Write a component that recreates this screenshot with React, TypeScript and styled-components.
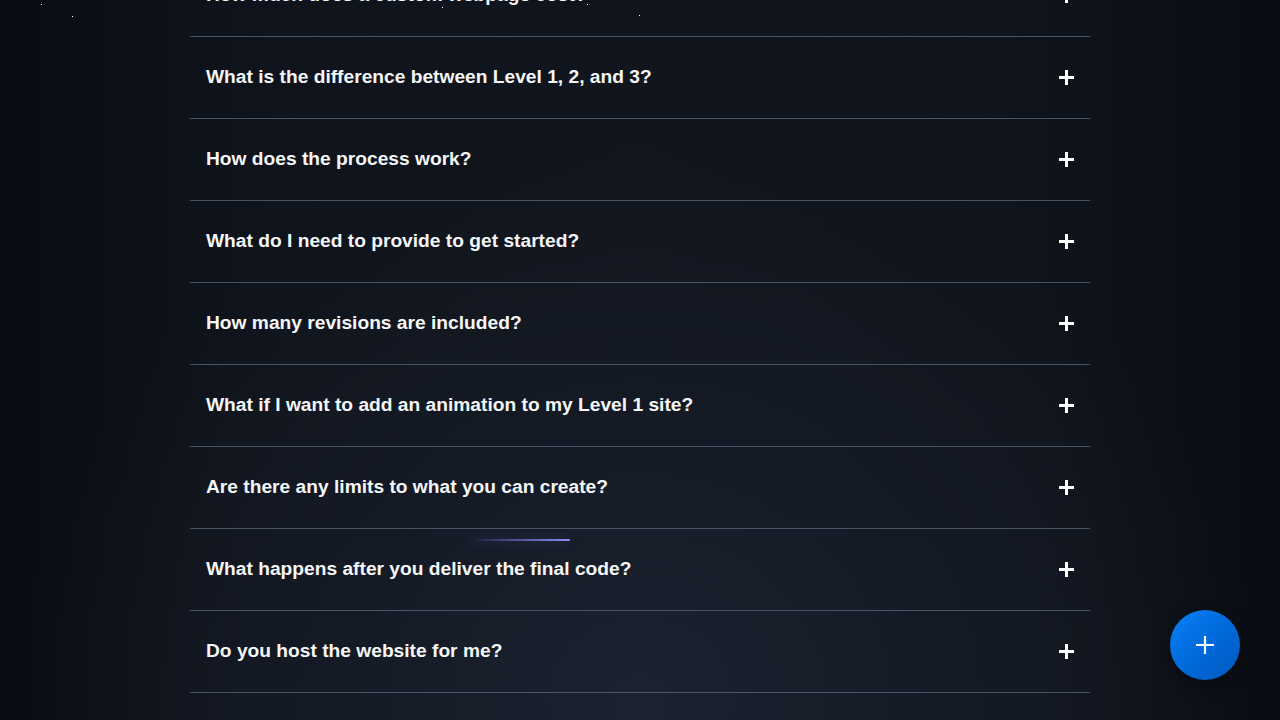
import { createGlobalStyle, styled } from 'styled-components';

const questions = [
  'How much does a custom webpage cost?',
  'What is the difference between Level 1, 2, and 3?',
  'How does the process work?',
  'What do I need to provide to get started?',
  'How many revisions are included?',
  'What if I want to add an animation to my Level 1 site?',
  'Are there any limits to what you can create?',
  'What happens after you deliver the final code?',
  'Do you host the website for me?',
];

const stars = [
  { x: 41, y: 4 },
  { x: 72, y: 16 },
  { x: 442, y: 7 },
  { x: 587, y: 4 },
  { x: 639, y: 15 },
];

const GlobalStyle = createGlobalStyle`
  html, body {
    margin: 0;
    padding: 0;
    height: 100%;
    overflow: hidden;
  }
  body {
    background: #0b0e14;
    font-family: "Liberation Sans", Arial, sans-serif;
  }
`;

export default function App() {
  return (
    <>
      <GlobalStyle />
      <Page>
        {stars.map((s, i) => (
          <Star key={i} style={{ left: s.x, top: s.y }} />
        ))}
        <Streak />
        <FaqList>
          {questions.map((q) => (
            <FaqItem key={q}>
              <Question>{q}</Question>
              <PlusIcon />
            </FaqItem>
          ))}
        </FaqList>
        <Fab aria-label="Open">
          <svg width="20" height="20" viewBox="0 0 20 20">
            <path d="M10 1v18M1 10h18" stroke="#fff" strokeWidth="2.2" />
          </svg>
        </Fab>
      </Page>
    </>
  );
}

const PlusIcon = () => (
  <svg width="15" height="15" viewBox="0 0 15 15">
    <path d="M7.5 0v15M0 7.5h15" stroke="#fff" strokeWidth="3" />
  </svg>
);

const Page = styled.div`
  position: relative;
  width: 1280px;
  height: 720px;
  overflow: hidden;
  background:
    radial-gradient(ellipse 620px 560px at 640px 700px, #1b2230 0%, #151b26 45%, rgba(14, 18, 26, 0) 100%),
    linear-gradient(90deg, #090c12 0%, #0f131b 18%, #11151d 50%, #0f131b 82%, #090c12 100%);
`;

const Star = styled.span`
  position: absolute;
  width: 1px;
  height: 1px;
  background: #fff;
`;

const Streak = styled.span`
  position: absolute;
  left: 470px;
  top: 539px;
  width: 100px;
  height: 2px;
  border-radius: 1px;
  background: linear-gradient(90deg, rgba(120, 124, 230, 0) 0%, rgba(120, 124, 230, 0.5) 40%, #8a8ef5 100%);
  box-shadow: 0 0 10px rgba(110, 115, 230, 0.35);
`;

const FaqList = styled.div`
  width: 900px;
  margin: -45px auto 0;
  display: flex;
  flex-direction: column;
`;

const FaqItem = styled.div`
  height: 81px;
  padding: 0 16px;
  display: flex;
  align-items: center;
  justify-content: space-between;
  border-bottom: 1px solid #4a5366;
  cursor: pointer;
`;

const Question = styled.span`
  color: #f5f6f8;
  font-size: 19.2px;
  font-weight: 700;
  line-height: 1.3;
`;

const Fab = styled.button`
  position: absolute;
  right: 40px;
  bottom: 40px;
  width: 70px;
  height: 70px;
  border: none;
  border-radius: 50%;
  background: linear-gradient(135deg, #0a80f8 0%, #0068d8 55%, #0058bd 100%);
  box-shadow: 0 6px 18px rgba(0, 0, 0, 0.35);
  display: flex;
  align-items: center;
  justify-content: center;
  padding: 0;
  cursor: pointer;
`;
